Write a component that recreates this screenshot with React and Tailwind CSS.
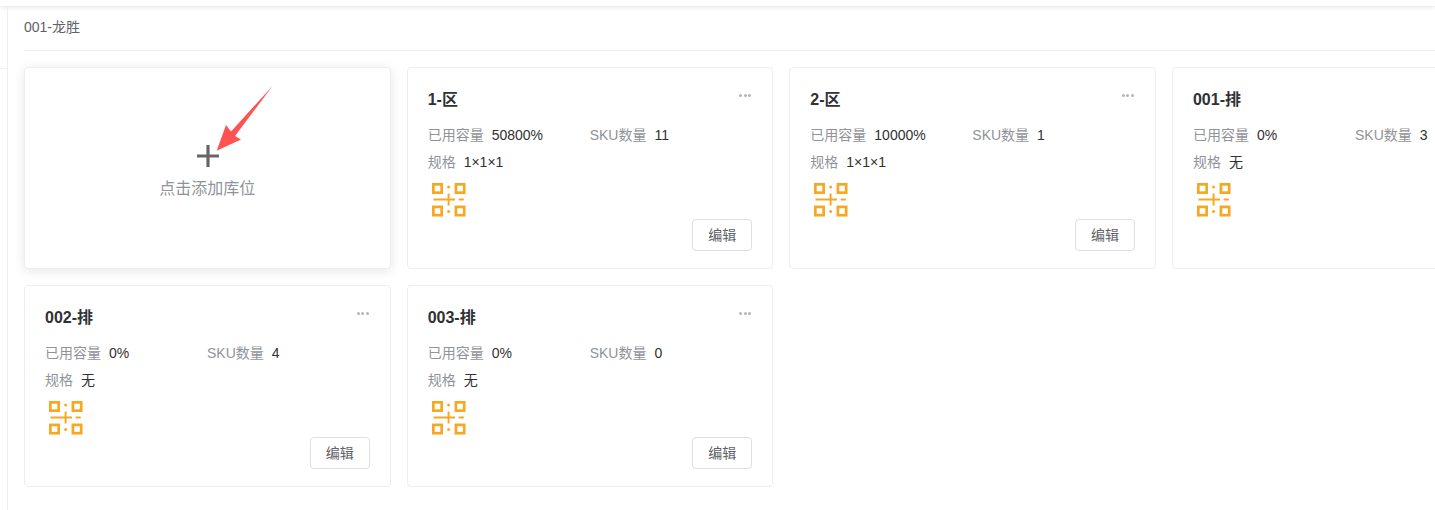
const cards = [
  { title: "1-区", used: "50800%", sku: "11", spec: "1×1×1" },
  { title: "2-区", used: "10000%", sku: "1", spec: "1×1×1" },
  { title: "001-排", used: "0%", sku: "3", spec: "无" },
  { title: "002-排", used: "0%", sku: "4", spec: "无" },
  { title: "003-排", used: "0%", sku: "0", spec: "无" },
];

function QrIcon() {
  return (
    <svg width="34" height="34" viewBox="0 0 34 34" fill="none" stroke="#f7a823" strokeWidth="2.7">
      <rect x="1.35" y="1.35" width="8.3" height="8.3" />
      <rect x="23.9" y="1.35" width="8.3" height="8.3" />
      <rect x="1.35" y="23.9" width="8.3" height="8.3" />
      <rect x="23.9" y="23.9" width="8.3" height="8.3" />
      <path d="M1.5 16.4H23M16.6 10.5V22.5" strokeWidth="2" />
      <path d="M27.5 16.4H31" strokeWidth="2" strokeLinecap="round" />
      <circle cx="16.6" cy="4" r="1.5" fill="#f7a823" stroke="none" />
      <circle cx="16.6" cy="28.5" r="1.5" fill="#f7a823" stroke="none" />
    </svg>
  );
}

function Card({ title, used, sku, spec }) {
  return (
    <div className="relative w-[366.67px] rounded border border-[#ebeef5] bg-white pl-5 pr-5 pt-5 pb-[17px]">
      <div className="absolute right-[21px] top-[26px] flex gap-[1.5px]">
        <span className="h-[3px] w-[3px] rounded-full bg-[#b4b4bb]" />
        <span className="h-[3px] w-[3px] rounded-full bg-[#b4b4bb]" />
        <span className="h-[3px] w-[3px] rounded-full bg-[#b4b4bb]" />
      </div>
      <div className="text-base leading-6 font-bold text-[#303133]">{title}</div>
      <div className="mt-[9px] flex h-[27px] items-center text-sm">
        <div className="flex w-[162px] items-center gap-2">
          <span className="text-[#909399]">已用容量</span>
          <span className="text-[#303133]">{used}</span>
        </div>
        <div className="flex items-center gap-2">
          <span className="text-[#909399]">SKU数量</span>
          <span className="text-[#303133]">{sku}</span>
        </div>
      </div>
      <div className="flex h-[27px] items-center gap-2 text-sm">
        <span className="text-[#909399]">规格</span>
        <span className="text-[#303133]">{spec}</span>
      </div>
      <div className="mt-2 ml-1 h-[34px] w-[34px]">
        <QrIcon />
      </div>
      <div className="mt-[2px] flex justify-end">
        <button className="h-8 w-[60px] rounded border border-[#dcdfe6] bg-white text-sm text-[#606266]">编辑</button>
      </div>
    </div>
  );
}

export default function App() {
  return (
    <div
      className="relative flex h-[510px] w-[1435px] flex-col overflow-hidden bg-white"
      style={{ fontFamily: '"Liberation Sans", "Noto Sans CJK SC", sans-serif' }}
    >
      <div className="h-[6px] shrink-0 bg-white shadow-[0_1px_5px_rgba(0,0,0,0.12)]" />
      <div className="flex min-h-0 flex-1">
        <div className="w-2 shrink-0 border-r border-[#ebeef5]">
          <div className="mt-[62px] h-px bg-[#ebeef5]" />
        </div>
        <div className="min-w-0 flex-1 pl-4">
          <div className="flex h-[45px] items-center border-b border-[#ebeef5] pb-[2px] text-sm text-[#606266]">001-龙胜</div>
          <div className="mt-4 grid w-[1500px] grid-cols-[repeat(4,366.67px)] gap-4">
            <div className="relative flex w-[366.67px] flex-col items-center rounded border border-[#ebeef5] bg-white pt-[76px] shadow-[0_2px_12px_rgba(0,0,0,0.1)]">
              <svg width="24" height="24" viewBox="0 0 24 24" className="ml-[2px] block" fill="none" stroke="#666666" strokeWidth="3.2">
                <path d="M1 12H23M12 1V23" />
              </svg>
              <div className="mt-[9px] text-base leading-6 text-[#909399]">点击添加库位</div>
              <svg className="absolute left-[190px] top-[16px]" width="60" height="70" viewBox="0 0 60 70" fill="#ff5252">
                <path d="M57.5 2L20 52L26 55.5L1.7 66.7L11 41L16 47.5Z" />
              </svg>
            </div>
            {cards.map((c) => (
              <Card key={c.title} {...c} />
            ))}
          </div>
        </div>
      </div>
    </div>
  );
}
